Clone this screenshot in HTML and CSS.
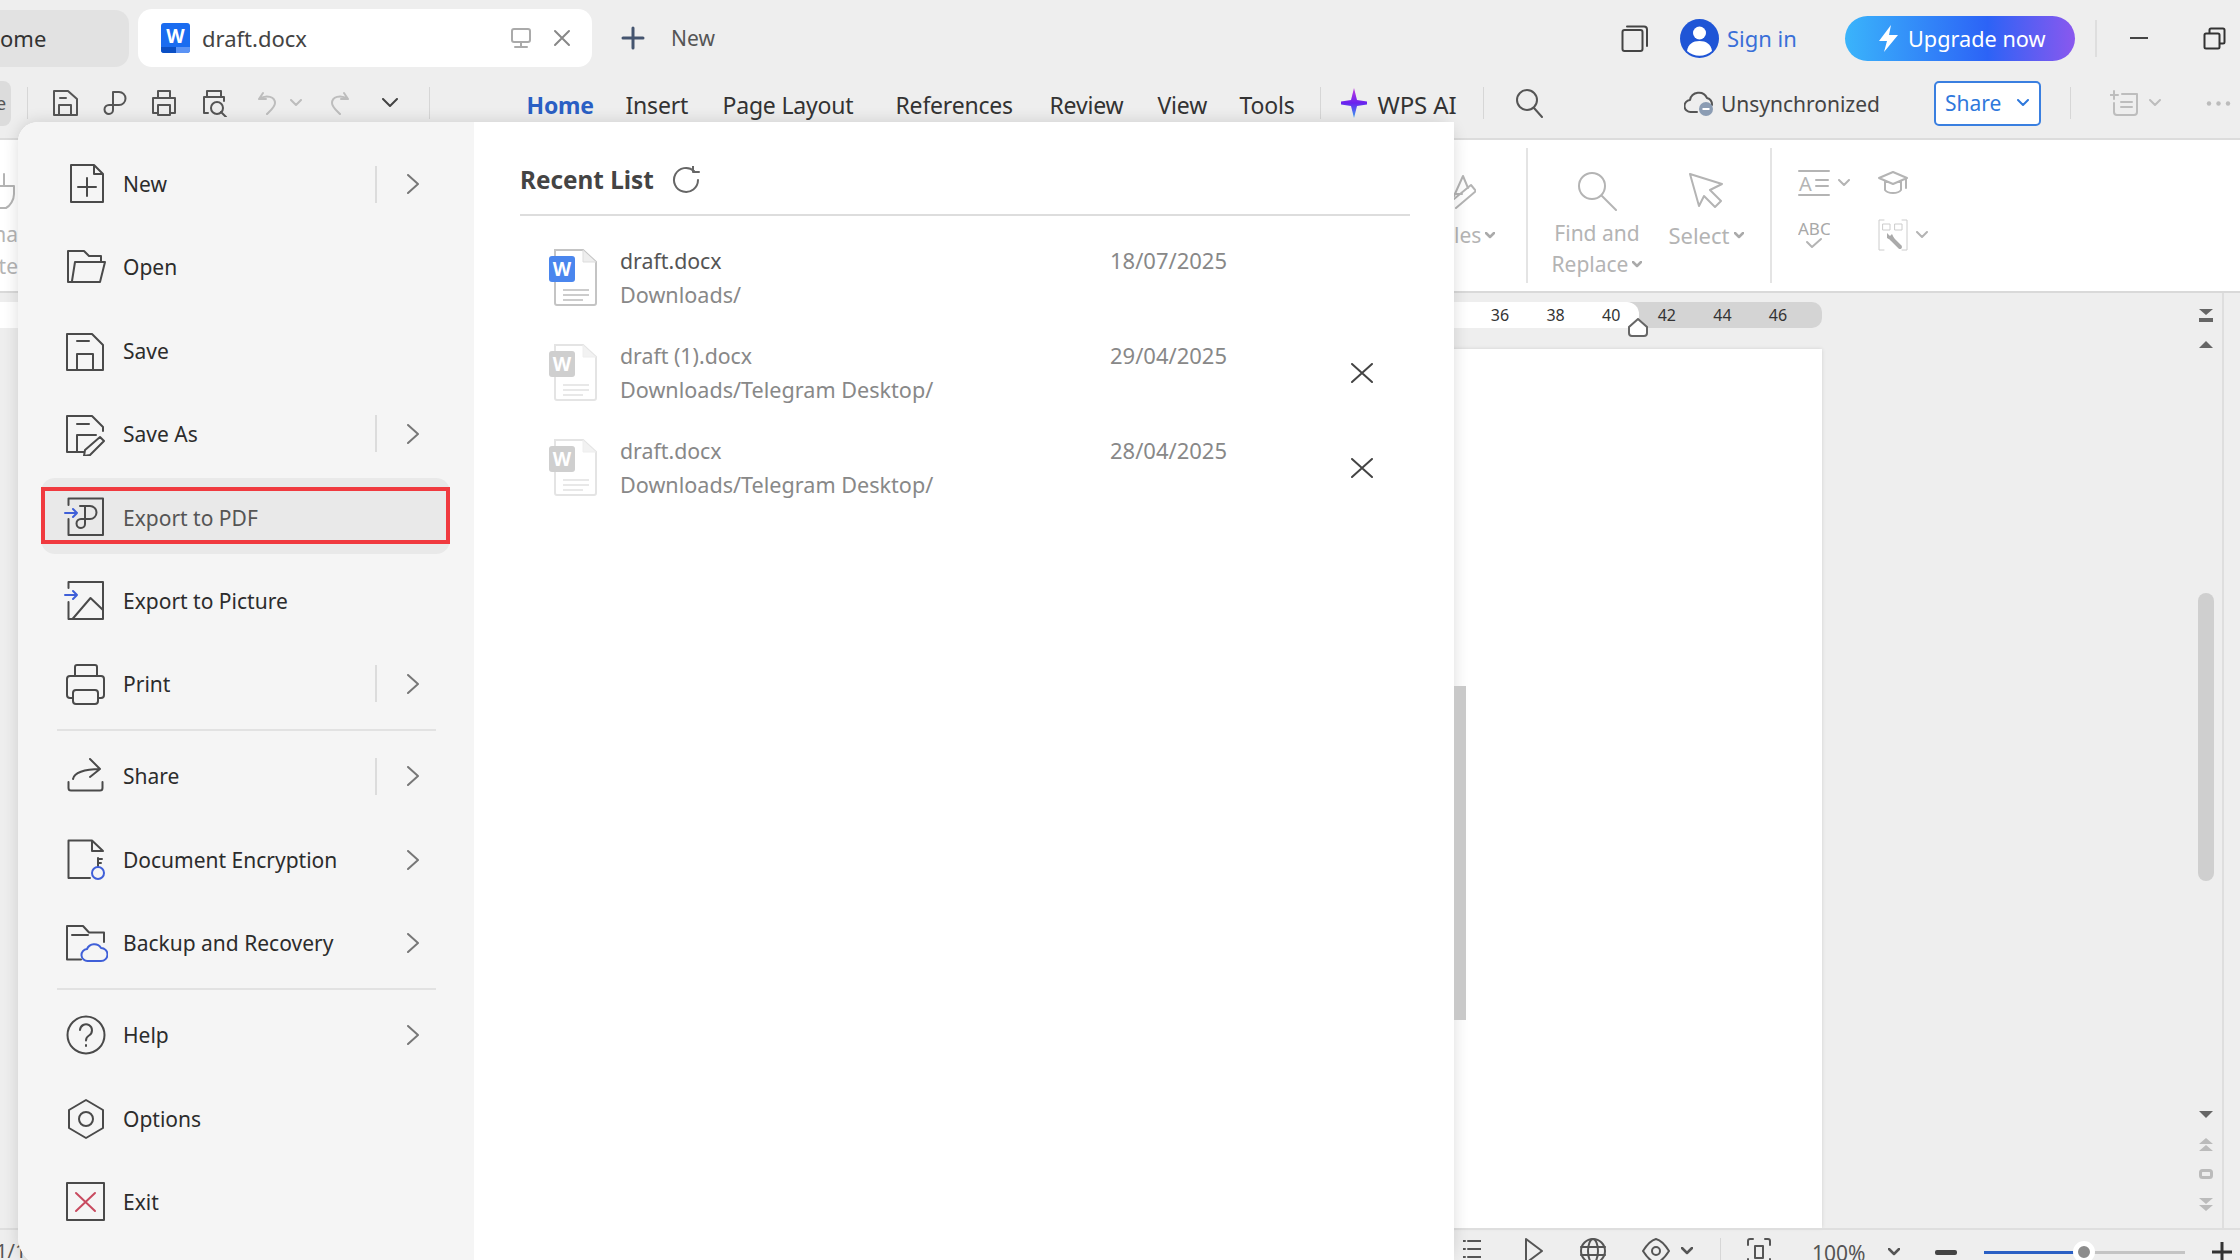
FILE: index.html
```html
<!DOCTYPE html>
<html lang="en">
<head>
  <meta charset="UTF-8">
  <title>draft.docx - WPS Office</title>
  <link rel="stylesheet" href="styles.css">
</head>
<body>
  <div class="app">

    <!-- title bar -->
    <header class="titlebar">
      <div class="tab-home">ome</div>
      <div class="tab-doc">
        <svg class="w-logo" width="29" height="30" viewBox="0 0 29 30"><rect width="29" height="30" rx="3" fill="#1a6cf0"/><path d="M0 24H15V30H3a3 3 0 0 1-3-3Z" fill="#0b4fc4"/><path d="M15 24H29V27a3 3 0 0 1-3 3H15Z" fill="#5b93f5"/><text x="14.5" y="20" text-anchor="middle" class="w-letter">W</text></svg>
        <span class="tab-name">draft.docx</span>
        <svg class="ico tab-device" width="22" height="22" viewBox="0 0 22 22"><rect x="2" y="2" width="18" height="13" rx="2"/><path d="M11 15V19M5 20H17"/></svg>
        <svg class="ico tab-close" width="18" height="18" viewBox="0 0 18 18"><path d="M2 2L16 16M16 2L2 16"/></svg>
      </div>
      <div class="tab-new">
        <svg class="ico plus" width="24" height="24" viewBox="0 0 24 24"><path d="M12 2V22M2 12H22"/></svg>
        <span>New</span>
      </div>
      <div class="title-right">
        <svg class="ico win-stack" width="27" height="27" viewBox="0 0 27 27"><rect x="1.5" y="5" width="20" height="21" rx="2"/><path d="M6 1.5H23a3 3 0 0 1 3 3V21"/></svg>
        <svg class="avatar" width="39" height="39" viewBox="0 0 39 39"><circle cx="19.5" cy="19.5" r="19.5" fill="#1f55d6"/><circle cx="19.5" cy="14" r="6.5" fill="#fff"/><path d="M7 32c1-7 6-10 12.5-10S31 25 32 32a19 19 0 0 1-25 0Z" fill="#fff"/></svg>
        <span class="sign-in">Sign in</span>
        <div class="upgrade">
          <svg width="21" height="27" viewBox="0 0 21 27"><path d="M13 0L1 16H9L6 27L20 10H11Z" fill="#fff"/></svg>
          <span>Upgrade now</span>
        </div>
        <span class="title-sep"></span>
        <svg class="ico win-min" width="18" height="4" viewBox="0 0 18 4"><path d="M0 2H18"/></svg>
        <svg class="ico win-restore" width="23" height="23" viewBox="0 0 23 23"><rect x="1.5" y="6.5" width="15" height="15" rx="1.5"/><path d="M6.5 6V3a1.5 1.5 0 0 1 1.5-1.5H20a1.5 1.5 0 0 1 1.5 1.5V15a1.5 1.5 0 0 1-1.5 1.5H17"/></svg>
      </div>
    </header>

    <!-- quick access + menu tabs -->
    <div class="toolbar">
      <div class="file-stub">e</div>
      <span class="tool-sep first"></span>
      <div class="quick">
        <svg class="ico" width="28" height="28" viewBox="0 0 28 28"><path d="M3 2H17L26 10V26H3ZM9 9H15M8 26V16H20V26"/></svg>
        <svg class="ico" width="28" height="28" viewBox="0 0 28 28"><path d="M12 3H18a6 6 0 0 1 0 13H8a4.5 4.5 0 0 0 0 9a4 4 0 0 0 4-4V3Z"/></svg>
        <svg class="ico" width="28" height="28" viewBox="0 0 28 28"><path d="M8 9V2H20V9M8 24H3V9H25V24H20M8 16H20V26H8Z"/></svg>
        <svg class="ico" width="28" height="28" viewBox="0 0 28 28"><path d="M7 8V2H21V8M4 24V8H24V12M4 24H8"/><circle cx="17" cy="19" r="6"/><path d="M21 23L26 28"/></svg>
      </div>
      <svg class="ico q-undo faint" width="20" height="24" viewBox="0 0 20 24"><path d="M6 2L2 8L9 8M2 8C10 3 18 6 18 12C18 16 14 19 10 23"/></svg>
      <svg class="ico q-chev1 faint" width="12" height="8" viewBox="0 0 12 8"><path d="M1 1L6 6L11 1"/></svg>
      <svg class="ico q-redo faint" width="20" height="24" viewBox="0 0 20 24"><path d="M14 2L18 8L11 8M18 8C10 3 2 6 2 12C2 16 6 19 10 23"/></svg>
      <svg class="ico q-more" width="16" height="10" viewBox="0 0 16 10"><path d="M1 1L8 8L15 1"/></svg>
      <span class="tool-sep second"></span>
      <nav class="menu-tabs">
        <span class="active">Home</span>
        <span>Insert</span>
        <span>Page Layout</span>
        <span>References</span>
        <span>Review</span>
        <span>View</span>
        <span>Tools</span>
      </nav>
      <span class="tool-sep third"></span>
      <svg class="wps-star" width="26" height="30" viewBox="0 0 26 30"><defs><linearGradient id="starFill" x1="0" y1="0" x2="0" y2="1"><stop offset="0" stop-color="#c23be0"/><stop offset=".5" stop-color="#6a22ee"/><stop offset="1" stop-color="#3aa6f5"/></linearGradient></defs><path d="M13 0L16 12L26 13.5V16.5L16 18L13 30L10 18L0 16.5V13.5L10 12Z" fill="url(#starFill)"/></svg>
      <span class="wps-ai">WPS AI</span>
      <span class="tool-sep fourth"></span>
      <svg class="ico t-search" width="28" height="30" viewBox="0 0 28 30"><circle cx="12" cy="12" r="10"/><path d="M19 20L27 29"/></svg>
      <div class="tool-right">
        <svg width="30" height="26" viewBox="0 0 30 26"><path class="ico" d="M13 22H7a6 6 0 0 1-1-12a9 9 0 0 1 17-2a7 7 0 0 1 5 7"/><circle cx="22" cy="19" r="7" fill="#8b9cb3"/><path d="M18.5 19H25.5" stroke="#fff" stroke-width="2"/></svg>
        <span class="unsync">Unsynchronized</span>
        <div class="share-btn">
          <span>Share</span>
          <svg class="ico" width="12" height="8" viewBox="0 0 12 8"><path d="M1 1L6 6L11 1"/></svg>
        </div>
        <span class="tool-sep fifth"></span>
        <svg class="ico faint t-comment" width="29" height="26" viewBox="0 0 29 26"><path d="M4 1V9M0 5H8M12 4H27V22a3 3 0 0 1-3 3H7a3 3 0 0 1-3-3V13M11 12H22M11 17H22"/></svg>
        <svg class="ico faint t-chev" width="12" height="8" viewBox="0 0 12 8"><path d="M1 1L6 6L11 1"/></svg>
        <svg class="t-dots" width="25" height="5" viewBox="0 0 25 5"><circle cx="3" cy="2.5" r="2.2"/><circle cx="12.5" cy="2.5" r="2.2"/><circle cx="22" cy="2.5" r="2.2"/></svg>
      </div>
    </div>

    <!-- ribbon, mostly hidden by the file menu -->
    <div class="ribbon">
      <div class="rib-clip">
        <svg class="ico" width="18" height="38" viewBox="0 0 18 38"><path d="M-6 14H14V22C14 28 10 34 6 36H-6M4 14V2"/></svg>
        <span>na</span>
        <span>nte</span>
      </div>
      <div class="rib-group rib-styles">
        <svg class="ico" width="22" height="38" viewBox="0 0 22 38"><path d="M0 24L9 4L14 16M0 22H8M2 36L22 19L17 13L0 27"/></svg>
        <span class="rib-label">les<svg class="ico chev" width="10" height="7" viewBox="0 0 10 7"><path d="M1 1L5 5L9 1"/></svg></span>
      </div>
      <div class="rib-group rib-find">
        <svg class="ico" width="40" height="40" viewBox="0 0 40 40"><circle cx="15" cy="15" r="13"/><path d="M25 25L39 39"/></svg>
        <span class="rib-label">Find and</span>
        <span class="rib-label">Replace<svg class="ico chev" width="10" height="7" viewBox="0 0 10 7"><path d="M1 1L5 5L9 1"/></svg></span>
      </div>
      <div class="rib-group rib-select">
        <svg class="ico" width="34" height="36" viewBox="0 0 34 36"><path d="M1 1L33 11L21 17L32 28L26 34L15 23L10 33Z"/></svg>
        <span class="rib-label">Select<svg class="ico chev" width="10" height="7" viewBox="0 0 10 7"><path d="M1 1L5 5L9 1"/></svg></span>
      </div>
      <div class="rib-tools">
        <div class="rib-tool">
          <svg class="ico" width="32" height="26" viewBox="0 0 32 26"><path d="M1 1H31M1 25H31M18 10H30M18 16H30"/><text x="1" y="21" class="rib-glyph">A</text></svg>
          <svg class="ico chev" width="12" height="8" viewBox="0 0 12 8"><path d="M1 1L6 6L11 1"/></svg>
        </div>
        <div class="rib-tool">
          <svg class="ico" width="30" height="24" viewBox="0 0 30 24"><path d="M15 1L29 7L15 13L1 7ZM7 10V19C10 23 20 23 23 19V10M28 8V17"/></svg>
        </div>
        <div class="rib-tool">
          <svg class="ico" width="32" height="28" viewBox="0 0 32 28"><text x="0" y="14" class="rib-abc">ABC</text><path d="M9 21L14 26L23 18"/></svg>
        </div>
        <div class="rib-tool">
          <svg class="ico" width="30" height="32" viewBox="0 0 30 32"><path class="tool-box" d="M6 1H1V31H6M24 1H29V31H24M5 5H12V11H5ZM17 5H24V11H17Z"/><path class="tool-key" d="M14 20L22 28"/><path class="tool-head" d="M9 14L12 17L14 15L17 21L14 22L9 19Z"/></svg>
          <svg class="ico chev" width="12" height="8" viewBox="0 0 12 8"><path d="M1 1L6 6L11 1"/></svg>
        </div>
      </div>
    </div>

    <!-- document area -->
    <div class="workspace">
      <div class="work-main">
        <div class="ruler">
          <div class="ruler-done">
            <span>36</span><span>38</span><span>40</span>
          </div>
          <div class="ruler-rest">
            <span>42</span><span>44</span><span>46</span>
          </div>
          <svg class="ruler-mark" width="20" height="19" viewBox="0 0 20 19"><path d="M10 1L19 9V15a3 3 0 0 1-3 3H4a3 3 0 0 1-3-3V9Z" fill="#fff" stroke="#666" stroke-width="2"/></svg>
        </div>
        <div class="page"></div>
      </div>
      <div class="vscroll">
        <svg class="top-split" width="16" height="14" viewBox="0 0 16 14"><path d="M1 0H15L8 6ZM1 9H15V13H1Z" fill="#666"/></svg>
        <svg class="arrow-up" width="14" height="7" viewBox="0 0 14 7"><path d="M7 0L14 7H0Z" fill="#666"/></svg>
        <div class="thumb"></div>
        <svg class="arrow-down" width="14" height="7" viewBox="0 0 14 7"><path d="M7 7L14 0H0Z" fill="#666"/></svg>
        <svg class="nav-prev" width="14" height="14" viewBox="0 0 14 14"><path d="M7 0L14 6H0ZM7 7L14 13H0Z" fill="#bbb"/></svg>
        <svg class="nav-dot" width="14" height="10" viewBox="0 0 14 10"><rect x="1.5" y="1.5" width="11" height="7" rx="2" fill="none" stroke="#bbb" stroke-width="3"/></svg>
        <svg class="nav-next" width="14" height="14" viewBox="0 0 14 14"><path d="M7 6L14 0H0ZM7 13L14 7H0Z" fill="#bbb"/></svg>
      </div>
      <div class="rail"></div>
    </div>

    <!-- status bar -->
    <footer class="statusbar">
      <div class="st-pages">1/1</div>
      <svg class="ico st-list" width="18" height="24" viewBox="0 0 18 24"><path d="M5 3H18M5 11H18M5 19H18M0 3H2M0 11H2M0 19H2"/></svg>
      <svg class="ico st-play" width="18" height="26" viewBox="0 0 18 26"><path d="M1 1L17 13L1 25Z"/></svg>
      <svg class="ico st-globe" width="26" height="26" viewBox="0 0 26 26"><circle cx="13" cy="13" r="12"/><ellipse cx="13" cy="13" rx="5" ry="12"/><path d="M1 9H25M1 17H25"/></svg>
      <svg class="ico st-eye" width="28" height="26" viewBox="0 0 28 26"><path d="M1 13C6 5 10 2 14 1C18 2 22 5 27 13C22 21 18 24 14 25C10 24 6 21 1 13Z"/><circle cx="14" cy="13" r="4"/></svg>
      <svg class="ico st-chev" width="12" height="8" viewBox="0 0 12 8"><path d="M1 1L6 6L11 1"/></svg>
      <span class="st-sep"></span>
      <svg class="ico st-focus" width="24" height="28" viewBox="0 0 24 28"><path d="M1 7V3a2 2 0 0 1 2-2H6M18 1H21a2 2 0 0 1 2 2V7M1 21V25a2 2 0 0 0 2 2H6M18 27H21a2 2 0 0 0 2-2V21M8 8H16V20H8Z"/></svg>
      <span class="st-zoom">100%</span>
      <svg class="ico st-chev2" width="12" height="8" viewBox="0 0 12 8"><path d="M1 1L6 6L11 1"/></svg>
      <span class="st-minus"></span>
      <div class="slider"><span class="slider-fill" style="width: 90px"></span><span class="slider-knob"></span></div>
      <svg class="st-plus" width="20" height="20" viewBox="0 0 20 20"><path d="M10 0V20M0 10H20" stroke="#333" stroke-width="3"/></svg>
    </footer>

    <!-- file menu over everything -->
    <div class="file-menu">
      <aside class="menu-left">
        <div class="menu-item">
          <svg class="ico" width="44" height="44" viewBox="0 0 44 44"><path d="M7 3H30L39 12V40H7ZM30 3V12H39M14 25H32M23 16V34"/></svg>
          <span class="label">New</span><span class="divider"></span>
          <svg class="ico arrow" width="12" height="20" viewBox="0 0 12 20"><path d="M1 1L11 10L1 19"/></svg>
        </div>
        <div class="menu-item">
          <svg class="ico" width="44" height="44" viewBox="0 0 44 44"><path d="M4 37V6H20L25 11H37V17M11 17H41L36 37H4M11 17L8 36"/></svg>
          <span class="label">Open</span>
        </div>
        <div class="menu-item">
          <svg class="ico" width="44" height="44" viewBox="0 0 44 44"><path d="M3 5H28L39 16V41H3ZM13 12H25M13 41V25H29V41"/></svg>
          <span class="label">Save</span>
        </div>
        <div class="menu-item">
          <svg class="ico" width="44" height="44" viewBox="0 0 44 44"><path d="M39 19V15L28 4H3V40H20M13 12H25M13 40V23H32M36 25L40 29L26 43L20 44L21 38Z"/></svg>
          <span class="label">Save As</span><span class="divider"></span>
          <svg class="ico arrow" width="12" height="20" viewBox="0 0 12 20"><path d="M1 1L11 10L1 19"/></svg>
        </div>
        <div class="menu-item picked">
          <svg class="ico" width="44" height="44" viewBox="0 0 44 44"><path d="M4.5 9V2.5H39V39H4.5V23M16 10H26a6.5 6.5 0 0 1 0 13H17a4.5 4.5 0 0 0 0 9a4 4 0 0 0 4-4V10"/><path class="blue-line" d="M1 17H13M9 13L13 17L9 21"/></svg>
          <span class="label">Export to PDF</span>
          <div class="red-box"></div>
        </div>
        <div class="menu-item">
          <svg class="ico" width="44" height="44" viewBox="0 0 44 44"><path d="M4.5 9V3H39V40H4.5V23M8.5 40L26.5 19L39 31"/><path class="blue-line" d="M1 16H13M9 12L13 16L9 20"/></svg>
          <span class="label">Export to Picture</span>
        </div>
        <div class="menu-item">
          <svg class="ico" width="44" height="44" viewBox="0 0 44 44"><path d="M11 14V5a2 2 0 0 1 2-2H31a2 2 0 0 1 2 2V14M9 36H6a3 3 0 0 1-3-3V17a3 3 0 0 1 3-3H37a3 3 0 0 1 3 3V33a3 3 0 0 1-3 3H34M12 28H31a3 3 0 0 1 3 3V39a3 3 0 0 1-3 3H12a3 3 0 0 1-3-3V31a3 3 0 0 1 3-3Z"/></svg>
          <span class="label">Print</span><span class="divider"></span>
          <svg class="ico arrow" width="12" height="20" viewBox="0 0 12 20"><path d="M1 1L11 10L1 19"/></svg>
        </div>
        <div class="menu-rule"></div>
        <div class="menu-item">
          <svg class="ico" width="44" height="44" viewBox="0 0 44 44"><path d="M9 25C10 19 20 15 36 15M26 5L36 15L26 23M4.5 28V34a2.5 2.5 0 0 0 2.5 2.5H36a2.5 2.5 0 0 0 2.5-2.5V28"/></svg>
          <span class="label">Share</span><span class="divider"></span>
          <svg class="ico arrow" width="12" height="20" viewBox="0 0 12 20"><path d="M1 1L11 10L1 19"/></svg>
        </div>
        <div class="menu-item">
          <svg class="ico" width="44" height="44" viewBox="0 0 44 44"><path d="M26 40H4.5V2.500H28L39 13H28V2.5M34 20V29M34 21H38M34 25H37"/><circle class="blue-line" cx="34" cy="35" r="6"/></svg>
          <span class="label">Document Encryption</span>
          <svg class="ico arrow" width="12" height="20" viewBox="0 0 12 20"><path d="M1 1L11 10L1 19"/></svg>
        </div>
        <div class="menu-item">
          <svg class="ico" width="44" height="44" viewBox="0 0 44 44"><path d="M17 38.5H3V5H19L25 11.5H40V21M8 14H24"/><path class="blue-line" d="M24 40a6 6 0 0 1-1-12a8 8 0 0 1 14-1a6.5 6.5 0 0 1 0 13Z"/></svg>
          <span class="label">Backup and Recovery</span>
          <svg class="ico arrow" width="12" height="20" viewBox="0 0 12 20"><path d="M1 1L11 10L1 19"/></svg>
        </div>
        <div class="menu-rule"></div>
        <div class="menu-item">
          <svg class="ico" width="44" height="44" viewBox="0 0 44 44"><circle cx="22" cy="22" r="18.5"/><path d="M16 17a6 6 0 1 1 9 5.5c-2 1.2-3 2.5-3 5M22 32V33"/></svg>
          <span class="label">Help</span>
          <svg class="ico arrow" width="12" height="20" viewBox="0 0 12 20"><path d="M1 1L11 10L1 19"/></svg>
        </div>
        <div class="menu-item">
          <svg class="ico" width="44" height="44" viewBox="0 0 44 44"><path d="M22 3L39 13V31L22 41L5 31V13Z"/><circle cx="22" cy="22" r="7"/></svg>
          <span class="label">Options</span>
        </div>
        <div class="menu-item">
          <svg class="ico" width="44" height="44" viewBox="0 0 44 44"><rect x="3" y="3" width="37" height="37"/><path class="red-line" d="M12 13L31 31M31 13L12 31"/></svg>
          <span class="label">Exit</span>
        </div>
      </aside>

      <section class="menu-right">
        <div class="recent-head">
          <span class="recent-title">Recent List</span>
          <svg class="ico refresh" width="28" height="28" viewBox="0 0 28 28"><path d="M22 5A12 12 0 1 0 26 14M21 0V6H27"/></svg>
        </div>
        <div class="recent-list">
          <div class="recent-row current">
            <svg class="file-icon" width="48" height="57" viewBox="0 0 48 57"><path d="M6 1H34L47 13V54a2 2 0 0 1-2 2H8a2 2 0 0 1-2-2Z" fill="#fff" stroke="#c4c4c4" stroke-width="2"/><path d="M34 1V13H47" fill="#eee" stroke="#ddd"/><path d="M14 41H40M14 46H40M14 51H34" stroke="#ccc" stroke-width="2"/><rect y="7" width="26" height="26" rx="3" fill="#4a86ee"/><text x="13" y="27" class="file-w">W</text></svg>
            <div class="recent-text">
              <div class="r-name">draft.docx</div>
              <div class="r-path">Downloads/</div>
            </div>
            <div class="r-date">18/07/2025</div>
          </div>
          <div class="recent-row">
            <svg class="file-icon" width="48" height="57" viewBox="0 0 48 57"><path d="M6 1H34L47 13V54a2 2 0 0 1-2 2H8a2 2 0 0 1-2-2Z" fill="#fff" stroke="#e4e4e4" stroke-width="2"/><path d="M34 1V13H47" fill="#f2f2f2" stroke="#eee"/><path d="M14 41H40M14 46H40M14 51H34" stroke="#e8e8e8" stroke-width="2"/><rect y="7" width="26" height="26" rx="3" fill="#cfcfcf"/><text x="13" y="27" class="file-w">W</text></svg>
            <div class="recent-text">
              <div class="r-name">draft (1).docx</div>
              <div class="r-path">Downloads/Telegram Desktop/</div>
            </div>
            <div class="r-date">29/04/2025</div>
            <svg class="ico r-close" width="22" height="20" viewBox="0 0 22 20"><path d="M1 1L21 19M21 1L1 19"/></svg>
          </div>
          <div class="recent-row">
            <svg class="file-icon" width="48" height="57" viewBox="0 0 48 57"><path d="M6 1H34L47 13V54a2 2 0 0 1-2 2H8a2 2 0 0 1-2-2Z" fill="#fff" stroke="#e4e4e4" stroke-width="2"/><path d="M34 1V13H47" fill="#f2f2f2" stroke="#eee"/><path d="M14 41H40M14 46H40M14 51H34" stroke="#e8e8e8" stroke-width="2"/><rect y="7" width="26" height="26" rx="3" fill="#cfcfcf"/><text x="13" y="27" class="file-w">W</text></svg>
            <div class="recent-text">
              <div class="r-name">draft.docx</div>
              <div class="r-path">Downloads/Telegram Desktop/</div>
            </div>
            <div class="r-date">28/04/2025</div>
            <svg class="ico r-close" width="22" height="20" viewBox="0 0 22 20"><path d="M1 1L21 19M21 1L1 19"/></svg>
          </div>
        </div>
      </section>

      <div class="menu-scroll"></div>
    </div>
  </div>
</body>
</html>
```

FILE: styles.css
```css
* {
  box-sizing: border-box;
}

body {
  margin: 0;
  font-family: "Noto Sans", sans-serif;
  font-size: 21px;
  color: #333;
  background-color: #eee;
  overflow: hidden;
}

.app {
  position: relative;
  width: 2240px;
  height: 1260px;
  overflow: hidden;
  display: flex;
  flex-direction: column;
}

.ico {
  fill: none;
  stroke: currentColor;
  stroke-width: 2;
  stroke-linecap: round;
  stroke-linejoin: round;
  flex: none;
}

.faint {
  color: #bdbdbd;
}

/* title bar */
.titlebar {
  height: 84px;
  padding-bottom: 8px;
  display: flex;
  align-items: center;
  flex: none;
}

.tab-home {
  width: 129px;
  height: 57px;
  margin-right: 9px;
  background-color: #e2e2e2;
  border-radius: 0 14px 14px 0;
  display: flex;
  align-items: center;
  font-size: 22px;
}

.tab-doc {
  width: 454px;
  height: 58px;
  padding-left: 23px;
  background-color: #fff;
  border-radius: 14px;
  display: flex;
  align-items: center;
  font-size: 22px;
  color: #444;
}

.w-letter {
  fill: #fff;
  font-size: 19px;
  font-weight: 700;
}

.tab-name {
  margin-left: 12px;
  width: 308px;
}

.tab-device {
  color: #aaa;
}

.tab-close {
  margin-left: 21px;
  color: #888;
}

.tab-new {
  margin-left: 29px;
  display: flex;
  align-items: center;
  gap: 26px;
  font-size: 21px;
  color: #555;
}

.plus {
  color: #44546f;
  stroke-width: 3;
}

.title-right {
  margin-left: auto;
  padding-right: 14px;
  display: flex;
  align-items: center;
}

.win-stack {
  color: #444;
}

.avatar {
  margin-left: 32px;
}

.sign-in {
  margin-left: 8px;
  width: 118px;
  font-size: 22px;
  color: #3a6fd8;
}

.upgrade {
  width: 230px;
  height: 45px;
  padding-left: 33px;
  border-radius: 23px;
  background: linear-gradient(90deg, #3ab4fb 0%, #2c63f6 62%, #8a58ee 100%);
  display: flex;
  align-items: center;
  gap: 9px;
  font-size: 21.7px;
  color: #fff;
}

.title-sep {
  width: 2px;
  height: 37px;
  margin-left: 20px;
  background-color: #dedede;
}

.win-min {
  margin-left: 33px;
  color: #444;
}

.win-restore {
  margin-left: 55px;
  color: #333;
}

/* toolbar */
.toolbar {
  height: 56px;
  padding-bottom: 16px;
  display: flex;
  align-items: center;
  flex: none;
  border-bottom: 2px solid #dcdcdc;
  color: #555;
}

.file-stub {
  width: 11px;
  height: 45px;
  background-color: #dcdcdc;
  border-radius: 0 8px 8px 0;
  overflow: hidden;
  font-size: 18px;
  line-height: 45px;
  text-indent: -4px;
}

.tool-sep {
  width: 1px;
  height: 32px;
  background-color: #d6d6d6;
  flex: none;
}

.tool-sep.first {
  margin-left: 16px;
}

.tool-sep.second {
  margin-left: 31px;
}

.quick {
  margin-left: 23px;
  display: flex;
  gap: 21.5px;
}

.q-undo {
  margin-left: 29px;
}

.q-chev1 {
  margin-left: 13px;
}

.q-redo {
  margin-left: 28px;
}

.q-more {
  margin-left: 32px;
  color: #444;
}

.menu-tabs {
  margin-left: 97px;
  margin-top: 4px;
  display: grid;
  grid-template-columns: 99px 97px 173px 154px 108px 82px auto;
  font-size: 23px;
  letter-spacing: -0.2px;
  color: #333;
}

.menu-tabs .active {
  color: #2a5fc4;
  font-weight: 700;
}

.tool-sep.third {
  margin-left: 26px;
}

.wps-star {
  margin-left: 20px;
}

.wps-ai {
  margin-left: 10px;
  margin-top: 3px;
  font-size: 24px;
  letter-spacing: -0.1px;
  color: #333;
}

.tool-sep.fourth {
  margin-left: 26px;
}

.t-search {
  margin-left: 31px;
}

.tool-right {
  margin-left: auto;
  padding-right: 9px;
  display: flex;
  align-items: center;
}

.tool-right path.ico {
  color: #555;
}

.unsync {
  margin-left: 7px;
  margin-top: 2px;
  font-size: 21px;
  color: #444;
}

.share-btn {
  width: 107px;
  height: 45px;
  margin-left: 54px;
  padding-left: 9px;
  border: 2px solid #3a7fe0;
  border-radius: 5px;
  background-color: #fff;
  color: #2f78dc;
  display: flex;
  align-items: center;
  gap: 16px;
  font-size: 21px;
}

.tool-sep.fifth {
  margin-left: 29px;
}

.t-comment {
  margin-left: 39px;
}

.t-chev {
  margin-left: 10px;
}

.t-dots {
  margin-left: 45px;
  fill: #bbb;
}

/* ribbon */
.ribbon {
  height: 153px;
  flex: none;
  background-color: #fff;
  border-bottom: 2px solid #d9d9d9;
  display: flex;
  color: #b4b4b4;
}

.rib-clip {
  width: 18px;
  overflow: hidden;
  padding-top: 32px;
  display: flex;
  flex-direction: column;
  align-items: flex-end;
  font-size: 21px;
  line-height: 32px;
  white-space: nowrap;
}

.rib-clip span {
  flex: none;
}

.rib-clip svg {
  margin-bottom: 8px;
}

.rib-group {
  display: flex;
  flex-direction: column;
  align-items: center;
  font-size: 21px;
  line-height: 32px;
  border-right: 2px solid #e4e4e4;
  margin-top: 8px;
  height: 135px;
}

.rib-label {
  white-space: nowrap;
  display: flex;
  align-items: center;
  gap: 4px;
}

.rib-label .chev {
  stroke-width: 2.5;
  color: #aaa;
}

.rib-styles {
  margin-left: 1436px;
  width: 74px;
  padding-top: 24px;
  align-items: flex-start;
}

.rib-styles .rib-label {
  margin-top: 9px;
  gap: 4px;
}

.rib-find {
  width: 130px;
  border-right: none;
  padding-top: 23px;
  padding-left: 8px;
  line-height: 31px;
}

.rib-find .rib-label:first-of-type {
  margin-top: 7px;
}

.rib-select {
  width: 114px;
  padding-top: 25px;
  padding-right: 16px;
}

.rib-select .rib-label {
  margin-top: 10px;
  font-size: 22px;
}

.rib-tools {
  margin-left: 26px;
  padding-top: 17px;
  display: grid;
  grid-template-columns: 80px 80px;
  grid-template-rows: 52px 52px;
  align-items: center;
}

.rib-tool {
  display: flex;
  align-items: center;
  gap: 8px;
}

.rib-glyph {
  font-size: 20px;
  fill: #b4b4b4;
  stroke: none;
}

.rib-abc {
  font-size: 17px;
  fill: #a8a8a8;
  stroke: none;
}

.tool-box {
  stroke-width: 1;
  color: #ccc;
}

.tool-key {
  stroke-width: 4;
  color: #aaa;
}

.tool-head {
  fill: #aaa;
  stroke: none;
}

/* workspace */
.workspace {
  flex: 1;
  min-height: 0;
  display: flex;
  background-color: #eee;
}

.work-main {
  width: 2198px;
  display: flex;
  flex-direction: column;
}

.ruler {
  position: relative;
  width: 1822px;
  height: 26px;
  margin-top: 9px;
  background-color: #d4d4d4;
  border-radius: 0 10px 10px 0;
  display: flex;
  flex: none;
  font-size: 16px;
  line-height: 26px;
}

.ruler-done {
  width: 1639px;
  background-color: #fff;
  border-radius: 0 12px 12px 0;
  display: flex;
  justify-content: flex-end;
}

.ruler-rest {
  display: flex;
}

.ruler span {
  width: 55.6px;
  text-align: center;
}

.ruler-mark {
  position: absolute;
  left: 1628px;
  top: 16px;
}

.page {
  width: 1762px;
  margin-left: 60px;
  margin-top: 21px;
  flex: 1;
  background-color: #fff;
  box-shadow: 0 0 4px rgba(0, 0, 0, 0.12);
}

.vscroll {
  width: 24px;
  padding-right: 8px;
  display: flex;
  flex-direction: column;
  align-items: center;
}

.top-split {
  margin-top: 16px;
}

.arrow-up {
  margin-top: 18px;
}

.thumb {
  width: 16px;
  height: 288px;
  margin-top: 245px;
  background-color: #cfcfcf;
  border-radius: 8px;
  flex: none;
}

.arrow-down {
  margin-top: 230px;
}

.nav-prev {
  margin-top: 20px;
}

.nav-dot {
  margin-top: 17px;
}

.nav-next {
  margin-top: 19px;
}

.rail {
  flex: 1;
  border-left: 2px solid #dedede;
}

/* status bar */
.statusbar {
  height: 32px;
  flex: none;
  padding-top: 8px;
  border-top: 2px solid #dedede;
  overflow: hidden;
  display: flex;
  align-items: flex-start;
  color: #555;
}

.st-pages {
  width: 1463px;
  margin-left: -4px;
  margin-right: 4px;
  font-size: 20px;
  line-height: 26px;
  flex: none;
}

.st-play {
  margin-left: 44px;
}

.st-globe {
  margin-left: 37px;
}

.st-eye {
  margin-left: 36px;
}

.st-chev {
  margin-left: 11px;
  margin-top: 9px;
  stroke-width: 2.5;
}

.st-sep {
  width: 1px;
  height: 26px;
  margin-left: 27px;
  background-color: #d6d6d6;
}

.st-focus {
  margin-left: 26px;
}

.st-zoom {
  margin-left: 41px;
  width: 54px;
  font-size: 21px;
  line-height: 30px;
}

.st-chev2 {
  margin-left: 22px;
  margin-top: 10px;
  stroke-width: 2.5;
}

.st-minus {
  width: 22px;
  height: 5px;
  margin-left: 35px;
  margin-top: 12px;
  background-color: #444;
  border-radius: 2px;
}

.slider {
  position: relative;
  width: 201px;
  height: 3px;
  margin-left: 27px;
  margin-top: 13px;
  background-color: #c4c4c4;
}

.slider-fill {
  position: absolute;
  left: 0;
  top: 0;
  height: 3px;
  background-color: #2a5fc4;
}

.slider-knob {
  position: absolute;
  left: 89px;
  top: -10px;
  width: 22px;
  height: 22px;
  background-color: #8c8c8c;
  border: 5px solid #fff;
  border-radius: 50%;
}

.st-plus {
  margin-left: 27px;
  margin-top: 4px;
}

/* file menu */
.file-menu {
  position: absolute;
  left: 18px;
  top: 122px;
  width: 1436px;
  height: 1145px;
  display: flex;
  border-radius: 20px 20px 30px 30px;
  background-color: #fff;
  box-shadow: 0 0 16px rgba(0, 0, 0, 0.14);
}

.menu-left {
  width: 456px;
  padding-top: 20.6px;
  background-color: #f5f5f5;
  border-radius: 20px 0 0 30px;
  flex: none;
}

.menu-item {
  position: relative;
  height: 83.2px;
  padding-left: 46px;
  display: flex;
  align-items: center;
  gap: 15px;
  color: #2c2c2c;
}

.menu-item .ico {
  color: #4a4a4a;
}

.label {
  flex: 1;
}

.divider {
  width: 2px;
  height: 37px;
  background-color: #dcdcdc;
  margin-right: 15px;
}

.menu-item .arrow {
  margin-right: 55px;
  color: #777;
}

.picked {
  height: 75.6px;
  margin: 3px 24px 5px 23px;
  padding-left: 23px;
  padding-top: 3px;
  background-color: #e9e9e9;
  border-radius: 14px;
  color: #555;
}

.red-box {
  position: absolute;
  left: 0;
  top: 9px;
  width: 100%;
  height: 57px;
  border: 4px solid #f03a3f;
}

.menu-item .blue-line {
  stroke: #3f5fd8;
}

.menu-item .red-line {
  stroke: #c84a5f;
}

.menu-rule {
  height: 2px;
  margin: 4px 38px 3.5px 39px;
  background-color: #e2e2e2;
}

.menu-right {
  flex: 1;
  padding: 34px 44px 0 46px;
  background-color: #fff;
}

.recent-head {
  height: 60px;
  padding-bottom: 11px;
  display: flex;
  align-items: center;
  gap: 18px;
  border-bottom: 2px solid #ddd;
}

.recent-title {
  font-size: 24.3px;
  font-weight: 700;
  color: #444;
}

.refresh {
  color: #666;
}

.recent-list {
  padding-top: 14px;
}

.recent-row {
  height: 95px;
  padding-left: 29px;
  display: flex;
  align-items: center;
  color: #888;
}

.recent-row.current .r-name {
  color: #555;
}

.file-icon {
  flex: none;
}

.file-w {
  fill: #fff;
  font-size: 19px;
  font-weight: 700;
  text-anchor: middle;
}

.recent-text {
  width: 490px;
  margin-left: 23px;
  line-height: 34px;
}

.r-name {
  font-size: 21.3px;
}

.r-path {
  font-size: 21.6px;
}

.r-date {
  align-self: flex-start;
  width: 241px;
  margin-top: 13px;
  font-size: 22px;
  line-height: 34px;
}

.r-close {
  color: #444;
}

.menu-scroll {
  position: absolute;
  left: 100%;
  top: 564px;
  width: 12px;
  height: 334px;
  background-color: #c9c9c9;
}
```
